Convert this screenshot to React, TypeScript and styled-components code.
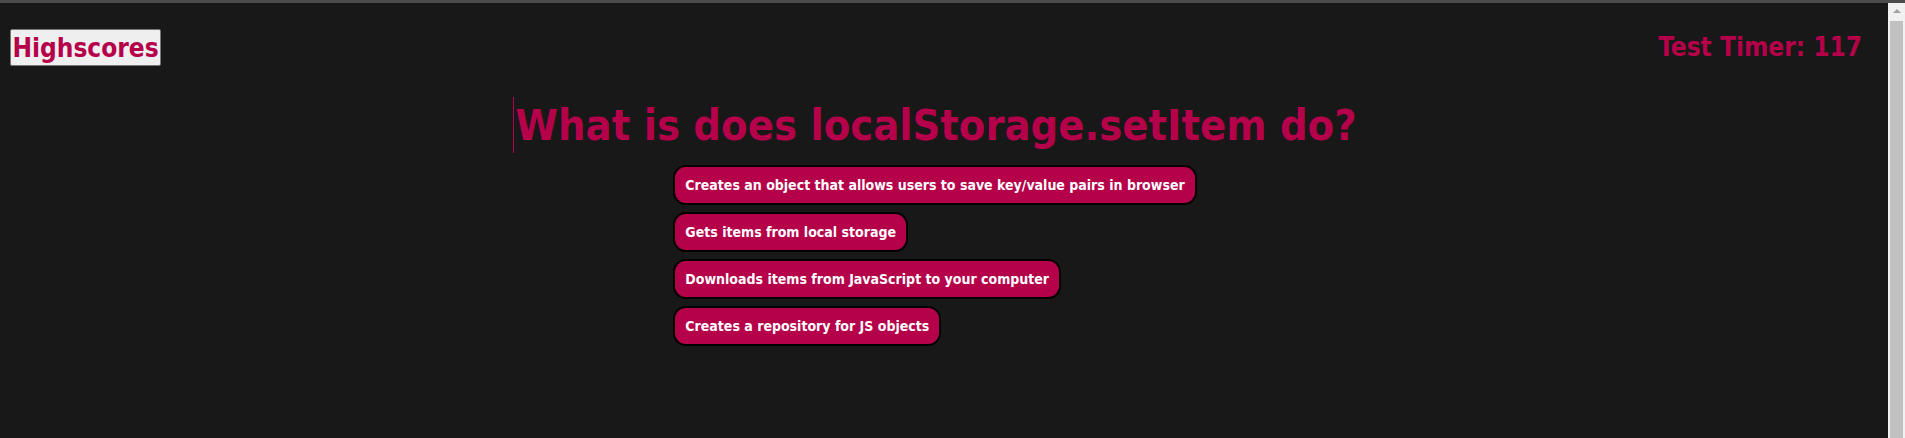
import React from "react";
import styled, { createGlobalStyle } from "styled-components";

const crimson = "#b5004a";
const font = `"DejaVu Sans Condensed", "Liberation Sans", sans-serif`;

const GlobalStyle = createGlobalStyle`
  html, body {
    margin: 0;
    padding: 0;
    background: #181818;
    overflow: hidden;
  }
  * { box-sizing: border-box; }
`;

const Frame = styled.div`
  height: 100vh;
  display: flex;
  flex-direction: column;
`;

const TopBar = styled.div`
  height: 3px;
  background: #4b4b4b;
  flex: none;
`;

const Body = styled.div`
  flex: 1;
  display: flex;
  min-height: 0;
`;

const Main = styled.main`
  flex: 1;
  background: #181818;
  font-family: ${font};
  font-weight: 700;
`;

const Header = styled.header`
  display: flex;
  justify-content: space-between;
  align-items: flex-start;
  padding: 26px 26px 0 10px;
`;

const HighscoresButton = styled.button`
  font-family: ${font};
  font-weight: 700;
  font-size: 26px;
  color: ${crimson};
  background: #efefef;
  border: 1px solid #767676;
  border-radius: 2px;
  width: 151px;
  height: 37px;
  padding: 0;
  line-height: 1;
  cursor: pointer;
`;

const Timer = styled.div`
  font-size: 26px;
  color: ${crimson};
  padding-top: 3px;
`;

const Question = styled.section`
  display: flex;
  flex-direction: column;
  align-items: center;
  padding-right: 18px;
`;

const Heading = styled.h1`
  margin: 31px 0 0;
  font-size: 43px;
  line-height: 56px;
  color: ${crimson};
  display: flex;
  align-items: center;
`;

const Caret = styled.span`
  width: 1px;
  height: 56px;
  background: ${crimson};
  margin-right: 1px;
`;

const AnswerList = styled.div`
  display: flex;
  flex-direction: column;
  align-items: flex-start;
  gap: 7px;
  margin-top: 12px;
`;

const AnswerButton = styled.button`
  height: 40px;
  padding: 0 10px;
  border: 2px solid #000;
  border-radius: 13px;
  background: ${crimson};
  color: #fff;
  font-family: ${font};
  font-weight: 700;
  font-size: 14px;
  cursor: pointer;
`;

const Scrollbar = styled.div`
  width: 17px;
  flex: none;
  background: #f1f1f1;
  display: flex;
  flex-direction: column;
  align-items: center;
`;

const ArrowUp = styled.div`
  margin-top: 6px;
  width: 0;
  height: 0;
  border-left: 4px solid transparent;
  border-right: 4px solid transparent;
  border-bottom: 4px solid #a3a3a3;
`;

const Thumb = styled.div`
  margin-top: 8px;
  width: 13px;
  flex: 1;
  background: #c1c1c1;
`;

const answers = [
  "Creates an object that allows users to save key/value pairs in browser",
  "Gets items from local storage",
  "Downloads items from JavaScript to your computer",
  "Creates a repository for JS objects",
];

export default function App() {
  return (
    <>
      <GlobalStyle />
      <Frame>
        <TopBar />
        <Body>
          <Main>
            <Header>
              <HighscoresButton>Highscores</HighscoresButton>
              <Timer>Test Timer: 117</Timer>
            </Header>
            <Question>
              <Heading>
                <Caret />
                What is does localStorage.setItem do?
              </Heading>
              <AnswerList>
                {answers.map((a) => (
                  <AnswerButton key={a}>{a}</AnswerButton>
                ))}
              </AnswerList>
            </Question>
          </Main>
          <Scrollbar>
            <ArrowUp />
            <Thumb />
          </Scrollbar>
        </Body>
      </Frame>
    </>
  );
}
